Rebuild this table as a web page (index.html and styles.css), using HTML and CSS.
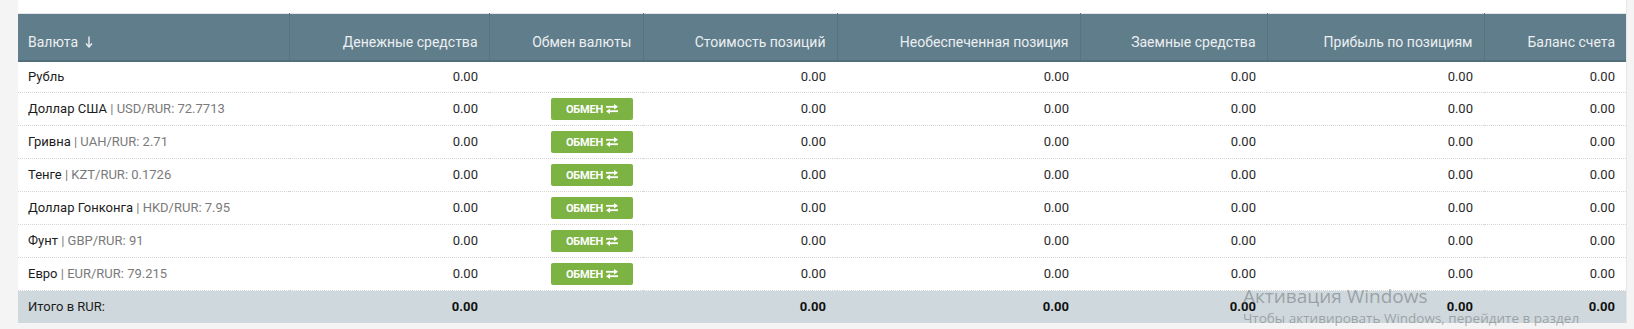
FILE: index.html
```html
<!DOCTYPE html>
<html lang="ru">
<head>
<meta charset="utf-8">
<title>Валюта</title>
<link rel="stylesheet" href="styles.css">
</head>
<body>
<div class="panel">
  <table class="grid">
    <colgroup>
      <col class="c1"><col class="c2"><col class="c3"><col class="c4"><col class="c5"><col class="c6"><col class="c7"><col class="c8">
    </colgroup>
    <thead>
      <tr>
        <th class="left">Валюта <svg class="sort" width="8" height="12" viewBox="0 0 8 12"><path d="M4 0.5V10.5" stroke="#eceff1" stroke-width="1.4" fill="none"/><path d="M1 7.5L4 11L7 7.5" stroke="#eceff1" stroke-width="1.4" fill="none"/></svg></th>
        <th>Денежные средства</th>
        <th>Обмен валюты</th>
        <th>Стоимость позиций</th>
        <th>Необеспеченная позиция</th>
        <th>Заемные средства</th>
        <th>Прибыль по позициям</th>
        <th>Баланс счета</th>
      </tr>
    </thead>
    <tbody>
      <tr class="plain">
        <td class="left">Рубль</td>
        <td>0.00</td><td></td><td>0.00</td><td>0.00</td><td>0.00</td><td>0.00</td><td>0.00</td>
      </tr>
      <tr>
        <td class="left">Доллар США <span class="rate">| USD/RUR: 72.7713</span></td>
        <td>0.00</td><td><button class="btn">ОБМЕН <svg width="12" height="10" viewBox="0 0 12 10"><path d="M0 2.8H9" stroke="#fff" stroke-width="1.8"/><path d="M8 0L12 2.8L8 5.6Z" fill="#fff"/><path d="M3 7.2H12" stroke="#fff" stroke-width="1.8"/><path d="M4 4.4L0 7.2L4 10Z" fill="#fff"/></svg></button></td><td>0.00</td><td>0.00</td><td>0.00</td><td>0.00</td><td>0.00</td>
      </tr>
      <tr>
        <td class="left">Гривна <span class="rate">| UAH/RUR: 2.71</span></td>
        <td>0.00</td><td><button class="btn">ОБМЕН <svg width="12" height="10" viewBox="0 0 12 10"><path d="M0 2.8H9" stroke="#fff" stroke-width="1.8"/><path d="M8 0L12 2.8L8 5.6Z" fill="#fff"/><path d="M3 7.2H12" stroke="#fff" stroke-width="1.8"/><path d="M4 4.4L0 7.2L4 10Z" fill="#fff"/></svg></button></td><td>0.00</td><td>0.00</td><td>0.00</td><td>0.00</td><td>0.00</td>
      </tr>
      <tr>
        <td class="left">Тенге <span class="rate">| KZT/RUR: 0.1726</span></td>
        <td>0.00</td><td><button class="btn">ОБМЕН <svg width="12" height="10" viewBox="0 0 12 10"><path d="M0 2.8H9" stroke="#fff" stroke-width="1.8"/><path d="M8 0L12 2.8L8 5.6Z" fill="#fff"/><path d="M3 7.2H12" stroke="#fff" stroke-width="1.8"/><path d="M4 4.4L0 7.2L4 10Z" fill="#fff"/></svg></button></td><td>0.00</td><td>0.00</td><td>0.00</td><td>0.00</td><td>0.00</td>
      </tr>
      <tr>
        <td class="left">Доллар Гонконга <span class="rate">| HKD/RUR: 7.95</span></td>
        <td>0.00</td><td><button class="btn">ОБМЕН <svg width="12" height="10" viewBox="0 0 12 10"><path d="M0 2.8H9" stroke="#fff" stroke-width="1.8"/><path d="M8 0L12 2.8L8 5.6Z" fill="#fff"/><path d="M3 7.2H12" stroke="#fff" stroke-width="1.8"/><path d="M4 4.4L0 7.2L4 10Z" fill="#fff"/></svg></button></td><td>0.00</td><td>0.00</td><td>0.00</td><td>0.00</td><td>0.00</td>
      </tr>
      <tr>
        <td class="left">Фунт <span class="rate">| GBP/RUR: 91</span></td>
        <td>0.00</td><td><button class="btn">ОБМЕН <svg width="12" height="10" viewBox="0 0 12 10"><path d="M0 2.8H9" stroke="#fff" stroke-width="1.8"/><path d="M8 0L12 2.8L8 5.6Z" fill="#fff"/><path d="M3 7.2H12" stroke="#fff" stroke-width="1.8"/><path d="M4 4.4L0 7.2L4 10Z" fill="#fff"/></svg></button></td><td>0.00</td><td>0.00</td><td>0.00</td><td>0.00</td><td>0.00</td>
      </tr>
      <tr>
        <td class="left">Евро <span class="rate">| EUR/RUR: 79.215</span></td>
        <td>0.00</td><td><button class="btn">ОБМЕН <svg width="12" height="10" viewBox="0 0 12 10"><path d="M0 2.8H9" stroke="#fff" stroke-width="1.8"/><path d="M8 0L12 2.8L8 5.6Z" fill="#fff"/><path d="M3 7.2H12" stroke="#fff" stroke-width="1.8"/><path d="M4 4.4L0 7.2L4 10Z" fill="#fff"/></svg></button></td><td>0.00</td><td>0.00</td><td>0.00</td><td>0.00</td><td>0.00</td>
      </tr>
    </tbody>
    <tfoot>
      <tr>
        <td class="left">Итого в RUR:</td>
        <td class="b">0.00</td><td></td><td class="b">0.00</td><td class="b">0.00</td><td class="b">0.00</td><td class="b">0.00</td><td class="b">0.00</td>
      </tr>
    </tfoot>
  </table>
</div>
<div class="watermark">
  <div class="wm1">Активация Windows</div>
  <div class="wm2">Чтобы активировать Windows, перейдите в раздел</div>
</div>
</body>
</html>
```
FILE: styles.css
```css
html, body {
  margin: 0;
  padding: 0;
}
body {
  background: #f4f4f4;
  font-family: Roboto, "Liberation Sans", sans-serif;
  font-size: 13px;
  color: #222;
  width: 1634px;
  height: 329px;
  overflow: hidden;
  position: relative;
}
.panel {
  margin-left: 18px;
  width: 1608px;
  background: #fff;
  padding-top: 13px;
  border-right: 1px solid #e6e6e6;
  box-sizing: content-box;
}
.grid {
  width: 1608px;
  table-layout: fixed;
  border-collapse: collapse;
  border-top: 1px solid #e3e6e8;
}
.c1 { width: 271px; }
.c2 { width: 200px; }
.c3 { width: 154px; }
.c4 { width: 194px; }
.c5 { width: 243px; }
.c6 { width: 187px; }
.c7 { width: 217px; }
.c8 { width: 142px; }

th {
  background: #607d8b;
  color: #eceff1;
  font-weight: 400;
  font-size: 14px;
  line-height: 20px;
  text-align: right;
  padding: 18px 11px 8px 10px;
  border-left: 1px solid #577380;
  border-bottom: 2px solid #546e7a;
  white-space: nowrap;
}
th:first-child { border-left: none; }
th.left { text-align: left; }
.sort { vertical-align: -1px; margin-left: 3px; }

td {
  text-align: right;
  padding: 5px 11px 5px 10px;
  line-height: 20px;
  height: 22px;
  border-bottom: 1px dotted #d6d6d6;
  white-space: nowrap;
  color: #2a2a2a;
}
tr.plain td { height: 20px; }
td.left { text-align: left; color: #1c1c1c; }
.rate { color: #7a7a7a; }

.btn {
  display: inline-flex;
  align-items: center;
  justify-content: center;
  gap: 3px;
  width: 82px;
  height: 22px;
  margin-right: -1px;
  background: #7cb342;
  color: #fff;
  border: none;
  border-radius: 2px;
  font-family: Roboto, "Liberation Sans", sans-serif;
  font-size: 11px;
  font-weight: 700;
  letter-spacing: -0.2px;
  padding: 0;
  vertical-align: middle;
}
.btn svg { display: block; }

tfoot td {
  background: #cfd8dc;
  padding-top: 6px;
  padding-bottom: 6px;
  height: 20px;
  border-bottom: none;
  color: #111;
}
tfoot td.b { font-weight: 700; }

.watermark {
  position: absolute;
  left: 1243px;
  top: 285px;
  color: rgba(110, 115, 118, 0.55);
  font-family: "Open Sans", "Noto Sans", sans-serif;
  pointer-events: none;
}
.wm1 { font-size: 19px; line-height: 22px; }
.wm2 { font-size: 13.5px; line-height: 20px; margin-top: 1px; }
```
